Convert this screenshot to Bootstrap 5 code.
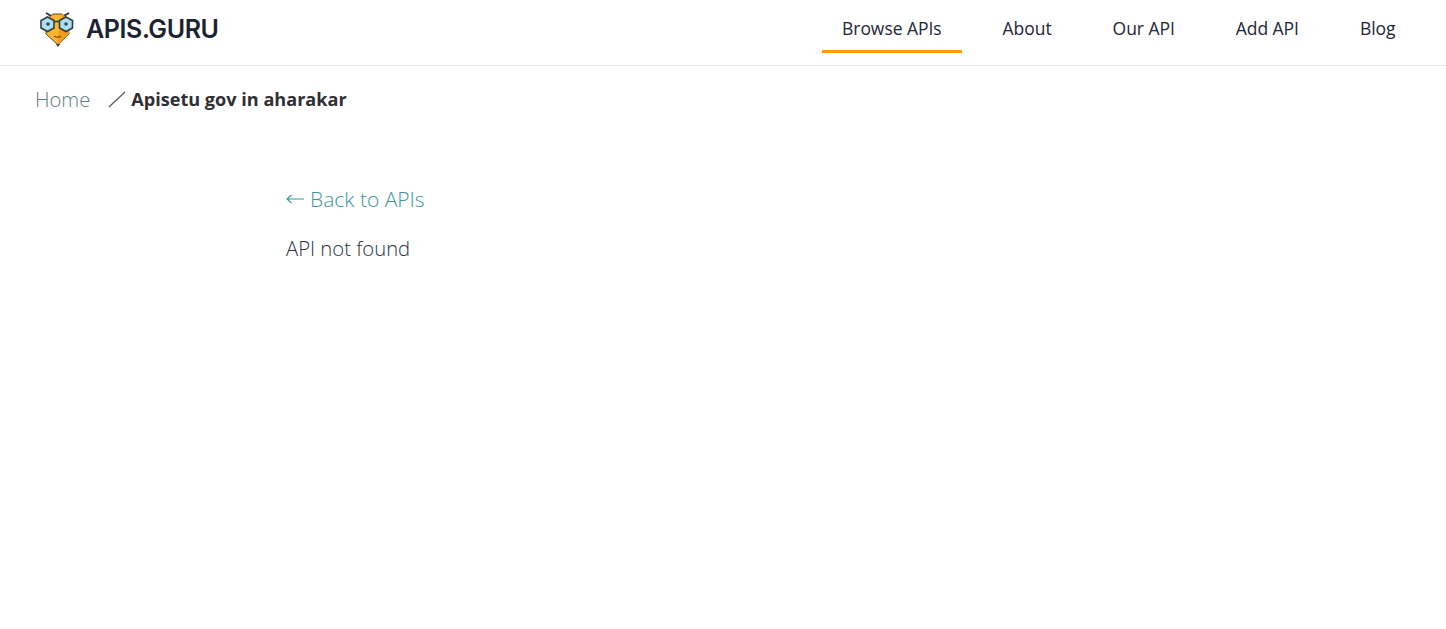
<!DOCTYPE html>
<html lang="en">
<head>
<meta charset="utf-8">
<title>APIs.guru</title>
<link href="https://cdn.jsdelivr.net/npm/bootstrap@5.3.0/dist/css/bootstrap.min.css" rel="stylesheet">
<style>
body{font-family:"Open Sans","Liberation Sans",sans-serif;background:#fff;color:#2b2b36;}
.top-bar{height:66px;border-bottom:1px solid #e8e8e8;padding:0 30px 0 40px;align-items:flex-start !important;}
.brand-link{font-family:"Inter",sans-serif;font-size:25px;font-weight:600;color:#1b2333;letter-spacing:-.4px;gap:11px;padding:0;margin:11px 0 0;line-height:36px;}
.brand-link:hover{color:#1b2333;}
.main-links{gap:20px;}
.top-bar .main-links .nav-link{font-size:17.5px;line-height:24px;font-weight:400;color:#232738;padding:16px 20.5px 10px;border-bottom:3px solid transparent;letter-spacing:-.05px;}
.top-bar .main-links .nav-link.active{color:#232738;border-bottom-color:#ff9a00;}
.crumb-row{margin:0;padding:21px 35px 0;font-size:20.2px;line-height:24px;--bs-breadcrumb-margin-bottom:0;}
.crumb-row .breadcrumb-item a{color:#5f7d80;text-decoration:none;font-weight:300;}
.crumb-row .breadcrumb-item+.breadcrumb-item{padding-left:18px;}
.crumb-row .breadcrumb-item+.breadcrumb-item::before{content:none;}
.crumb-row .breadcrumb-item.active{color:#2f3033;font-weight:700;display:flex;align-items:center;gap:5px;font-size:18.1px;}
.content-area{padding:72px 0 0 286px;font-size:20.25px;line-height:26px;font-weight:300;}
.back-link{color:#3d95a3;text-decoration:none;font-size:21px;display:inline-flex;align-items:center;gap:6px;}
.back-link:hover{color:#3d95a3;}
.missing-note{margin:27px 0 0;color:#2b3340;}
.back-row{height:25px;}
</style>
</head>
<body>
<nav class="navbar navbar-expand top-bar d-flex justify-content-between">
  <a class="navbar-brand brand-link d-flex align-items-center" href="#">
    <svg width="35" height="36" viewBox="0 0 35 36" aria-hidden="true">
      <path d="M13 6 6 2M22 6l7-4" stroke="#33302c" stroke-width="2" fill="none"/>
      <path d="M13 3h9l6 5 1 15-11 11L6 23l1-15Z" fill="#fbb62f" stroke="#5a4a2c" stroke-width="1"/>
      <path d="M22 3l6 5 1 15-11 11V22l3-5Z" fill="#f29c1f"/>
      <path d="M16 33h4l-2 3Z" fill="#33302c"/>
      <path d="M7.500 6 14 9.500v7.500L7.500 20.500 1 17V9.500Z" fill="#a9e0f4" stroke="#3b3b3b" stroke-width="1.6"/>
      <path d="M26 6 32.500 9.500v7.500L26 20.500 19.500 17V9.500Z" fill="#a9e0f4" stroke="#3b3b3b" stroke-width="1.6"/>
      <path d="M14 10.500h5.500" stroke="#3b3b3b" stroke-width="1.6"/>
      <circle cx="8" cy="13" r="1.800" fill="#2f4a57"/><circle cx="26" cy="13" r="1.800" fill="#2f4a57"/>
      <path d="M14 25.500q3.500 1.500 7 0" stroke="#5b3d14" stroke-width="1" fill="none"/>
    </svg>
    APIS.GURU
  </a>
  <ul class="navbar-nav main-links">
    <li class="nav-item"><a class="nav-link active" href="#">Browse APIs</a></li>
    <li class="nav-item"><a class="nav-link" href="#">About</a></li>
    <li class="nav-item"><a class="nav-link" href="#">Our API</a></li>
    <li class="nav-item"><a class="nav-link" href="#">Add API</a></li>
    <li class="nav-item"><a class="nav-link" href="#">Blog</a></li>
  </ul>
</nav>
<ol class="breadcrumb crumb-row">
  <li class="breadcrumb-item"><a href="#">Home</a></li>
  <li class="breadcrumb-item active" aria-current="page">
    <svg width="18" height="17" viewBox="0 0 18 17" aria-hidden="true"><path d="M1 16 17 1" stroke="#55585a" stroke-width="1.2"/></svg>
    Apisetu gov in aharakar
  </li>
</ol>
<main class="content-area">
  <div class="back-row"><a class="back-link" href="#"><svg width="18" height="10" viewBox="0 0 18 10" aria-hidden="true"><path d="M18 5H1M5.500 1 1 5l4.500 4" stroke="#3d95a3" stroke-width="1.1" fill="none"/></svg>Back to APIs</a></div>
  <p class="missing-note">API not found</p>
</main>
<script src="https://cdn.jsdelivr.net/npm/bootstrap@5.3.0/dist/js/bootstrap.bundle.min.js"></script>
</body>
</html>
